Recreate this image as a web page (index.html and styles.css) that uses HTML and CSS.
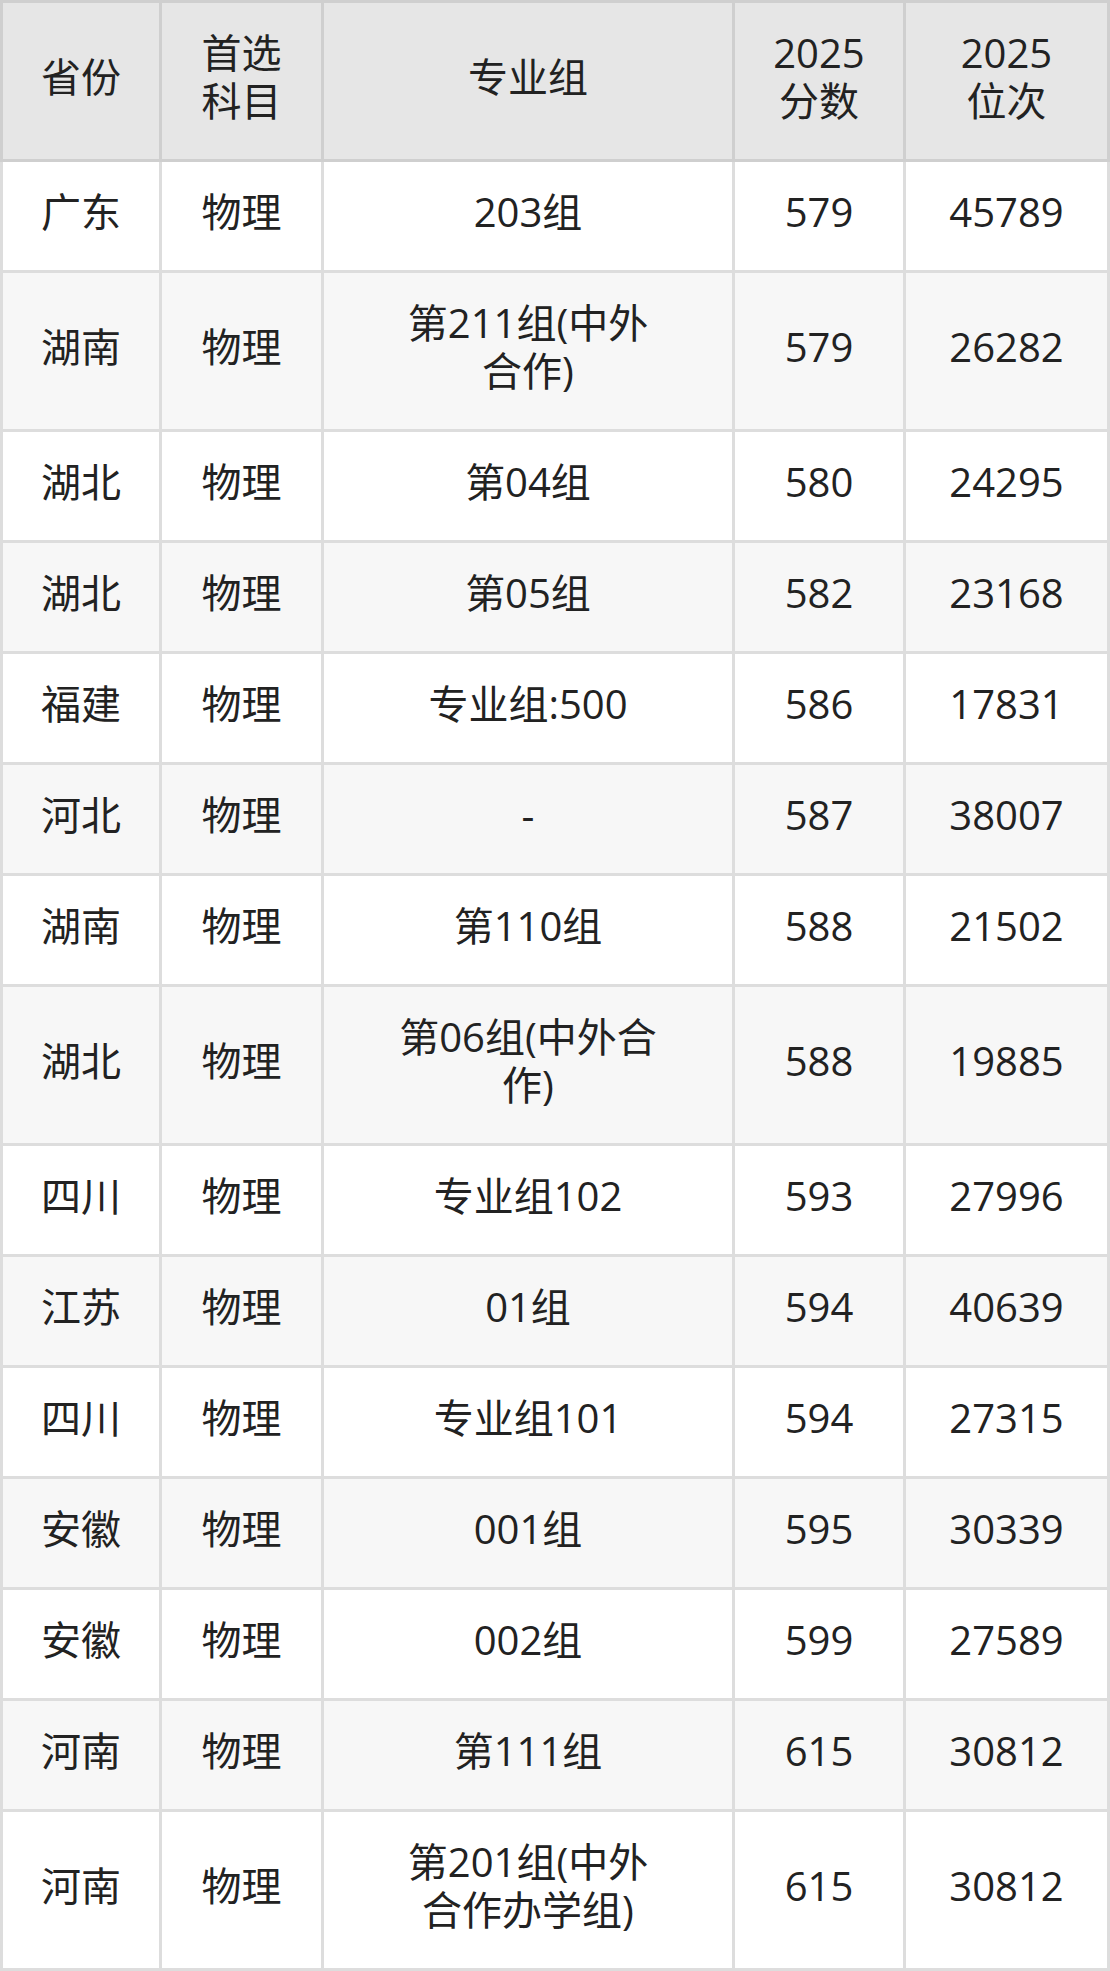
FILE: index.html
```html
<!DOCTYPE html>
<html lang="zh-CN">
<head>
<meta charset="utf-8">
<title>2025 分数位次</title>
<link rel="stylesheet" href="styles.css">
</head>
<body>
<table class="score-table">
  <colgroup>
    <col class="c-prov">
    <col class="c-subj">
    <col class="c-group">
    <col class="c-score">
    <col class="c-rank">
  </colgroup>
  <thead>
    <tr>
      <th>省份</th>
      <th>首选<br>科目</th>
      <th>专业组</th>
      <th>2025<br>分数</th>
      <th>2025<br>位次</th>
    </tr>
  </thead>
  <tbody>
    <tr><td>广东</td><td>物理</td><td class="grp">203组</td><td>579</td><td>45789</td></tr>
    <tr><td>湖南</td><td>物理</td><td class="grp">第211组(中外合作)</td><td>579</td><td>26282</td></tr>
    <tr><td>湖北</td><td>物理</td><td class="grp">第04组</td><td>580</td><td>24295</td></tr>
    <tr><td>湖北</td><td>物理</td><td class="grp">第05组</td><td>582</td><td>23168</td></tr>
    <tr><td>福建</td><td>物理</td><td class="grp">专业组:500</td><td>586</td><td>17831</td></tr>
    <tr><td>河北</td><td>物理</td><td class="grp">-</td><td>587</td><td>38007</td></tr>
    <tr><td>湖南</td><td>物理</td><td class="grp">第110组</td><td>588</td><td>21502</td></tr>
    <tr><td>湖北</td><td>物理</td><td class="grp">第06组(中外合作)</td><td>588</td><td>19885</td></tr>
    <tr><td>四川</td><td>物理</td><td class="grp">专业组102</td><td>593</td><td>27996</td></tr>
    <tr><td>江苏</td><td>物理</td><td class="grp">01组</td><td>594</td><td>40639</td></tr>
    <tr><td>四川</td><td>物理</td><td class="grp">专业组101</td><td>594</td><td>27315</td></tr>
    <tr><td>安徽</td><td>物理</td><td class="grp">001组</td><td>595</td><td>30339</td></tr>
    <tr><td>安徽</td><td>物理</td><td class="grp">002组</td><td>599</td><td>27589</td></tr>
    <tr><td>河南</td><td>物理</td><td class="grp">第111组</td><td>615</td><td>30812</td></tr>
    <tr><td>河南</td><td>物理</td><td class="grp">第201组(中外合作办学组)</td><td>615</td><td>30812</td></tr>
  </tbody>
</table>
</body>
</html>
```

FILE: styles.css
```css
html, body {
  margin: 0;
  padding: 0;
  background: #ffffff;
}

.score-table {
  width: 1110px;
  table-layout: fixed;
  border-collapse: collapse;
  font-family: "Open Sans", "Noto Sans CJK SC", sans-serif;
  font-size: 40px;
  line-height: 48px;
  color: #222222;
}

.c-prov { width: 159px; }
.c-subj { width: 162px; }
.c-group { width: 411px; }
.c-score { width: 171px; }
.c-rank { width: 204px; }

.score-table th,
.score-table td {
  border: 3px solid #dddddd;
  padding: 26px 6px 34px;
  text-align: center;
  vertical-align: middle;
  font-weight: 400;
}

.score-table th {
  background: #e6e6e6;
  border-color: #cfcfcf;
}

.score-table td.grp {
  padding-left: 72px;
  padding-right: 72px;
}

.score-table tbody tr:nth-child(even) td {
  background: #f7f7f7;
}
```
